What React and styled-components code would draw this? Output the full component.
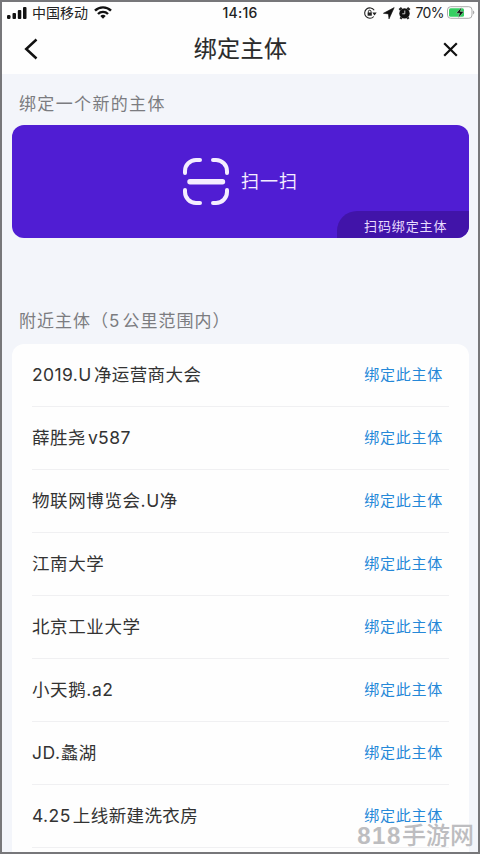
import React from "react"
import styled, { createGlobalStyle } from "styled-components"

const subjects = [
  { name: "2019.U净运营商大会", spaced: true },
  { name: "薛胜尧v587", spaced: true },
  { name: "物联网博览会.U净" },
  { name: "江南大学" },
  { name: "北京工业大学" },
  { name: "小天鹅.a2" },
  { name: "JD.蠡湖" },
  { name: "4.25上线新建洗衣房", spaced: true },
]

const GlobalStyle = createGlobalStyle`
  * {
    box-sizing: border-box;
  }

  body {
    margin: 0;
    font-family: Inter, "Noto Sans CJK SC", sans-serif;
    text-autospace: no-autospace;
  }

  button {
    padding: 0;
    border: 0;
    background: none;
    color: inherit;
    font: inherit;
  }

  svg {
    display: block;
    flex-shrink: 0;
  }
`

const Screen = styled.div`
  position: relative;
  display: flex;
  flex-direction: column;
  width: 480px;
  height: 854px;
  overflow: hidden;
  border: 2px solid #77777a;
  background: #f3f5fa;
`

const StatusBar = styled.div`
  display: grid;
  grid-template-columns: 1fr auto 1fr;
  align-items: center;
  flex-shrink: 0;
  height: 21px;
  padding: 0 3px 0 5px;
  background: #fefefe;
  color: #222;
  font-size: 14px;
  line-height: 20px;
`

const StatusGroup = styled.div`
  display: flex;
  align-items: center;
  justify-content: ${({ $end }) => ($end ? "flex-end" : "flex-start")};
`

const Carrier = styled.span`
  margin: 0 6px 0 5px;
  font-size: 14px;
`

const Time = styled.span`
  padding-right: 2px;
  font-size: 14px;
  font-weight: 500;
  letter-spacing: 0.2px;
`

const Percent = styled.span`
  margin: 0 3px 0 5px;
  font-size: 14px;
  letter-spacing: -0.6px;
`

const NavBar = styled.header`
  display: flex;
  align-items: center;
  justify-content: space-between;
  flex-shrink: 0;
  height: 51px;
  padding: 1px 20px 0 22px;
  background: #fefefe;
  color: #111;
`

const Title = styled.h1`
  margin: 0;
  color: #2a2a2a;
  font-size: 23px;
  font-weight: 400;
  line-height: 34px;
  letter-spacing: 0.4px;
  -webkit-text-stroke: 0.15px #2a2a2a;
`

const Content = styled.main`
  display: flex;
  flex-direction: column;
  flex: 1;
  min-height: 0;
  padding: 16px 9px 0 10px;
`

const SectionLabel = styled.h2`
  flex-shrink: 0;
  margin: 0 0 0 7px;
  color: #7b7c80;
  font-size: 17px;
  font-weight: 400;
  line-height: 28px;
  letter-spacing: ${({ $tight }) => ($tight ? "1px" : "1.35px")};
  text-autospace: normal;
`

const ScanCard = styled.button`
  position: relative;
  display: flex;
  align-items: center;
  justify-content: center;
  gap: 11px;
  flex-shrink: 0;
  height: 113px;
  margin: 7px 0 69px;
  overflow: hidden;
  border-radius: 12px;
  background: #501dd3;
  color: #f4edff;
`

const ScanText = styled.span`
  padding: 0 1px 3px 0;
  font-size: 18px;
  letter-spacing: 1px;
`

const ScanHint = styled.span`
  position: absolute;
  right: 0;
  bottom: 0;
  width: 132px;
  height: 27px;
  padding-left: 27px;
  border-top-left-radius: 20px;
  background: #4114a9;
  color: #e9dcff;
  font-size: 13px;
  line-height: 30px;
  letter-spacing: 0.9px;
  text-align: left;
`

const SubjectList = styled.ul`
  flex: 1;
  min-height: 0;
  margin: 9px 0 0;
  padding: 0 20px;
  overflow: hidden;
  border-radius: 12px 12px 0 0;
  background: #fefefe;
  list-style: none;
`

const SubjectRow = styled.li`
  display: flex;
  align-items: center;
  justify-content: space-between;
  height: 63px;
  border-bottom: 1px solid #f0f0f2;
`

const SubjectName = styled.span`
  color: #333;
  font-size: 17.5px;
  line-height: 26px;
  letter-spacing: ${({ $spaced }) => ($spaced ? "0.4px" : "0.6px")};
  text-autospace: ${({ $spaced }) => ($spaced ? "normal" : "no-autospace")};
`

const BindButton = styled.button`
  margin-right: 6px;
  color: #2588d8;
  font-size: 15px;
  line-height: 22px;
  letter-spacing: 0.75px;
`

const Watermark = styled.div`
  position: absolute;
  right: 4px;
  bottom: -1px;
  color: #bdbdc0;
  font-family: "Liberation Sans", "Noto Sans CJK SC", sans-serif;
  font-size: 24px;
  font-weight: 500;
  line-height: 34px;

  span {
    font-weight: 700;
    letter-spacing: 1.6px;
  }
`

const SignalIcon = () => (
  <svg width="20" height="14" viewBox="0 0 20 14" fill="#111">
    <rect x="0" y="9" width="3.5" height="4" rx="1.2" />
    <rect x="5.5" y="7" width="3.5" height="6" rx="1" />
    <rect x="10.8" y="4" width="3.5" height="9" rx="1" />
    <rect x="16" y="1" width="3.5" height="12" rx="1" />
  </svg>
)

const WifiIcon = () => (
  <svg width="18" height="13" viewBox="0 0 18 13" fill="none" stroke="#111" strokeWidth="2.4">
    <path d="M1 4.7a11.3 11.3 0 0 1 16 0" />
    <path d="M4 8a7 7 0 0 1 10 0" />
    <path d="M9 12.7 6.3 10a3.8 3.8 0 0 1 5.4 0z" fill="#111" stroke="none" />
  </svg>
)

const StatusIcons = () => (
  <svg width="48" height="14" viewBox="0 0 48 14" fill="none" stroke="#222">
    <path d="M10.8 10.5A5.2 5.2 0 1 1 11.2 4.2" strokeWidth="1.1" />
    <path d="M9.3 6.6h4.4l-2.2 2.8z" fill="#222" stroke="none" />
    <rect x="4.6" y="6.5" width="4.2" height="3.2" fill="#222" stroke="none" />
    <path d="M5.4 6.8V5.5a1.3 1.3 0 0 1 2.6 0v1.3" />
    <path d="M31.2 1.6 20.4 7.3l5 .6.6 5z" fill="#111" stroke="#111" strokeWidth="0.6" strokeLinejoin="round" />
    <circle cx="41.5" cy="7.4" r="5.2" fill="#111" stroke="none" />
    <path d="m36.3 3.8 2.4-2M44.3 1.8l2.4 2M38.5 11.3l-1 1.5M44.5 11.3l1 1.5" strokeWidth="2.2" />
    <path d="M41.8 4.5v3.3h-2.5" stroke="#ddd" strokeWidth="0.9" />
  </svg>
)

const BatteryIcon = () => (
  <svg width="28" height="13" viewBox="0 0 28 13">
    <rect x="0.5" y="0.7" width="24.5" height="11.6" rx="3.2" fill="#fff" stroke="#aaa" />
    <rect x="2" y="2.2" width="15" height="8.6" rx="1.6" fill="#36cf62" />
    <path d="M26 4.6c1.8.6 1.8 3.2 0 3.8z" fill="#aaa" />
    <path d="m14.5 1.2-5.3 6h3.4l-1.3 4.8 5.6-6.5h-3.6z" fill="#111" stroke="#fff" strokeWidth="0.3" />
  </svg>
)

const BackIcon = () => (
  <svg width="14" height="22" viewBox="0 0 14 22" fill="none" stroke="currentColor" strokeWidth="2.5">
    <path d="M12.5 1.5 2.2 11l10.3 9.5" />
  </svg>
)

const CloseIcon = () => (
  <svg width="15" height="15" viewBox="0 0 15 15" fill="none" stroke="currentColor" strokeWidth="2.2">
    <path d="m1.2 1.2 12.6 12.6M13.8 1.2 1.2 13.8" />
  </svg>
)

const ScanIcon = () => (
  <svg
    width="48"
    height="50"
    viewBox="0 0 48 50"
    fill="none"
    stroke="#f4edff"
    strokeWidth="4"
    strokeLinecap="round"
  >
    <path d="M3 16v-2A11 11 0 0 1 14 3h4M31 3h3a11 11 0 0 1 11 11v2" />
    <path d="M3 33v2a11 11 0 0 0 11 11h4M31 46h3a11 11 0 0 0 11-11v-2" />
    <path d="M8 24.8h32.5" strokeWidth="5.4" />
  </svg>
)

const App = () => (
  <>
    <GlobalStyle />
    <Screen lang="zh-CN">
      <StatusBar>
        <StatusGroup>
          <SignalIcon />
          <Carrier>中国移动</Carrier>
          <WifiIcon />
        </StatusGroup>
        <Time>14:16</Time>
        <StatusGroup $end>
          <StatusIcons />
          <Percent>70%</Percent>
          <BatteryIcon />
        </StatusGroup>
      </StatusBar>

      <NavBar>
        <button aria-label="返回">
          <BackIcon />
        </button>
        <Title>绑定主体</Title>
        <button aria-label="关闭">
          <CloseIcon />
        </button>
      </NavBar>

      <Content>
        <SectionLabel>绑定一个新的主体</SectionLabel>
        <ScanCard>
          <ScanIcon />
          <ScanText>扫一扫</ScanText>
          <ScanHint>扫码绑定主体</ScanHint>
        </ScanCard>
        <SectionLabel $tight>附近主体（5公里范围内）</SectionLabel>
        <SubjectList>
          {subjects.map(({ name, spaced }) => (
            <SubjectRow key={name}>
              <SubjectName $spaced={spaced}>{name}</SubjectName>
              <BindButton>绑定此主体</BindButton>
            </SubjectRow>
          ))}
        </SubjectList>
      </Content>

      <Watermark>
        <span>818</span>手游网
      </Watermark>
    </Screen>
  </>
)

export default App
